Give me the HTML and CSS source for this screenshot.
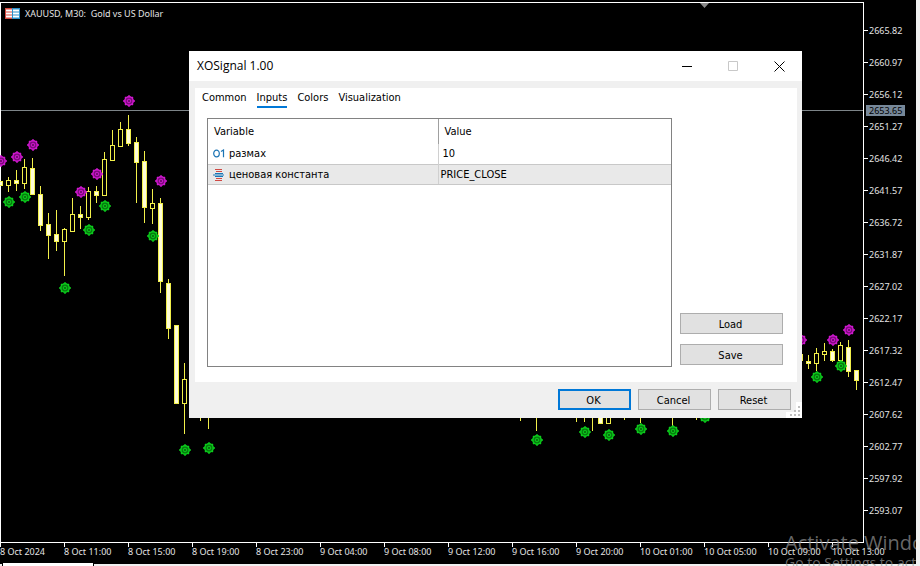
FILE: index.html
```html
<!DOCTYPE html>
<html lang="en">
<head>
<meta charset="UTF-8">
<title>XAUUSD, M30</title>
<link rel="stylesheet" href="styles.css">
</head>

<body>

<main class="terminal">

	<section class="chart">
		<svg class="plot" id="plot">
			<defs>
				<g id="gear">
					<path d="M0 -6V6M-6 0H6M-4 -4L4 4M-4 4L4 -4" stroke-width="1.3" />
					<circle r="4.2" stroke-width="1.5" />
					<circle r="1.8" stroke-width="1" />
				</g>
			</defs>
			<path class="shift-mark" d="M700 3H709L704.500 8Z" />
			<path class="wicks" id="wicks" />
			<path class="hollow" id="hollow" />
			<path class="filled" id="filled" />
			<g id="gears"></g>
		</svg>

		<div class="price-line"></div>

		<h1 class="symbol">
			<svg width="15" height="11" viewBox="0 0 15 11">
				<path fill="#d8493f" d="M0 0H7V11H0Z" />
				<path fill="#2a8fc9" d="M7 0H15V11H7Z" />
				<path stroke="#fff" stroke-width="2" d="M1 2.500H7M1 5.500H7M1 8.500H7M8 2.500H14M8 5.500H14M8 8.500H14" />
			</svg>
			<span>XAUUSD, M30:&nbsp; Gold vs US Dollar</span>
		</h1>
	</section>

	<aside class="prices">
		<span>2665.82</span>
		<span>2660.97</span>
		<span>2656.12</span>
		<span>2651.27</span>
		<span>2646.42</span>
		<span>2641.57</span>
		<span>2636.72</span>
		<span>2631.87</span>
		<span>2627.02</span>
		<span>2622.17</span>
		<span>2617.32</span>
		<span>2612.47</span>
		<span>2607.62</span>
		<span>2602.77</span>
		<span>2597.92</span>
		<span>2593.07</span>
		<strong class="current">2653.65</strong>
	</aside>

	<div class="times">
		<span>8 Oct 2024</span>
		<span>8 Oct 11:00</span>
		<span>8 Oct 15:00</span>
		<span>8 Oct 19:00</span>
		<span>8 Oct 23:00</span>
		<span>9 Oct 04:00</span>
		<span>9 Oct 08:00</span>
		<span>9 Oct 12:00</span>
		<span>9 Oct 16:00</span>
		<span>9 Oct 20:00</span>
		<span>10 Oct 01:00</span>
		<span>10 Oct 05:00</span>
		<span>10 Oct 09:00</span>
		<span>10 Oct 13:00</span>
	</div>

	<div class="bottom-tabs"><div class="bottom-tab"></div></div>

	<div class="watermark">
		<p class="watermark-title">Activate Windows</p>
		<p>Go to Settings to activate Windows.</p>
	</div>

</main>

<form class="dialog" role="dialog" aria-labelledby="dialog-title">

	<header class="titlebar">
		<h2 id="dialog-title">XOSignal 1.00</h2>
		<button type="button" aria-label="Minimize">
			<svg width="11" height="11"><path d="M0 5.500H10" /></svg>
		</button>
		<button type="button" aria-label="Maximize" disabled>
			<svg width="11" height="11"><path d="M.5 .5H9.500V9.500H.5Z" /></svg>
		</button>
		<button type="button" aria-label="Close">
			<svg width="11" height="11"><path d="M.5 .5L10.500 10.500M10.500 .5L.5 10.500" /></svg>
		</button>
	</header>

	<div class="panel">
		<nav class="tabs">
			<a href="#common">Common</a>
			<a href="#inputs" class="active">Inputs</a>
			<a href="#colors">Colors</a>
			<a href="#visualization">Visualization</a>
		</nav>

		<div class="inputs">
			<div class="table-box">
				<table>
					<thead>
						<tr><th>Variable</th><th>Value</th></tr>
					</thead>
					<tbody>
						<tr>
							<td>
								<svg width="12" height="10" viewBox="0 0 12 10">
									<ellipse cx="3.500" cy="4.500" rx="2.800" ry="3.300" fill="none" stroke="#1c74b4" stroke-width="1.200" />
									<path d="M8 2.500L10.500 1V8.300" fill="none" stroke="#1c74b4" stroke-width="1.200" />
								</svg>размах
							</td>
							<td class="number">10</td>
						</tr>
						<tr class="selected">
							<td>
								<svg width="12" height="12" viewBox="0 0 12 12">
									<path d="M2 .5H9M3 2.500H9M3 9.500H9M2 11.500H9" stroke="#cf4a45" />
									<path d="M2 4.500H10M2 7.500H10M0 6H11" stroke="#1878b8" />
								</svg>ценовая константа
							</td>
							<td>PRICE_CLOSE</td>
						</tr>
					</tbody>
				</table>
			</div>

			<div class="side">
				<button type="button">Load</button>
				<button type="button">Save</button>
			</div>
		</div>
	</div>

	<footer class="actions">
		<button type="submit" class="default">OK</button>
		<button type="button">Cancel</button>
		<button type="reset">Reset</button>
	</footer>

	<svg class="grip" width="16" height="16">
		<path class="grip-corner" d="M10 0H16V16H0V10H10Z" />
		<path d="M12 4h2v2h-2zM8 8h2v2h-2zM12 8h2v2h-2zM4 12h2v2h-2zM8 12h2v2h-2zM12 12h2v2h-2z" />
	</svg>
</form>

<script src="chart.js"></script>

</body>
</html>
```
FILE: styles.css
```css
* {
	box-sizing: border-box;
}

body {
	margin: 0;
	position: relative;
	background-color: #000;
	font-family: "DejaVu Sans Condensed", "Noto Sans", sans-serif;
	font-size: 11px;
	color: #000;
}

h1, h2, p {
	margin: 0;
	font-weight: normal;
}

button {
	font: inherit;
	color: inherit;
}

/* chart window */

.terminal {
	position: relative;
	display: grid;
	grid-template-columns: 1fr 53px;
	grid-template-rows: 1fr 20px 3px;
	min-height: 100vh;
	padding-top: 2px;
	border-right: 4px solid #f0f0f0;
	overflow: hidden;
	color: #e4e4e4;
	font-family: "Noto Sans", sans-serif;
	font-size: 9px;
}

.chart {
	position: relative;
	border: 1px solid #fff;
	margin-right: -1px;
}

.plot {
	position: absolute;
	top: -3px;
	left: -1px;
	width: 100%;
	height: 100%;
}

.shift-mark {
	fill: #8a8a8a;
}

.wicks, .hollow, .filled {
	stroke: #f2f04a;
	stroke-width: 1;
	fill: none;
	shape-rendering: crispEdges;
}

.hollow {
	fill: #000;
}

.filled {
	fill: #fffdd8;
}

.sell {
	stroke: #d018d0;
	fill: #780a78;
}

.buy {
	stroke: #0ccc1c;
	fill: #06780e;
}

.price-line {
	position: absolute;
	top: 107px;
	left: 0;
	right: 0;
	height: 1px;
	background-color: #7d8488;
}

.symbol {
	position: relative;
	display: flex;
	align-items: center;
	gap: 5px;
	padding: 4px;
	font-size: 9px;
	line-height: 13px;
}

.prices {
	position: relative;
	display: flex;
	flex-direction: column;
	padding-top: 12px;
}

.prices span {
	display: flex;
	align-items: center;
	gap: 1px;
	height: 32px;
}

.prices span::before {
	content: "";
	width: 5px;
	height: 1px;
	background-color: #fff;
}

.current {
	position: absolute;
	top: 103px;
	left: 3px;
	width: 39px;
	padding-left: 3px;
	background-color: #778899;
	color: #000;
	font-weight: normal;
	line-height: 11px;
}

.times {
	grid-column: 1 / -1;
	display: flex;
	overflow: hidden;
}

.times span {
	flex: none;
	width: 64px;
	line-height: 18px;
	white-space: nowrap;
}

.times span::before {
	content: "";
	display: block;
	width: 1px;
	height: 4px;
	margin-bottom: -4px;
	background-color: #fff;
}

.bottom-tabs {
	grid-column: 1 / -1;
	display: flex;
	align-items: flex-end;
	padding-left: 2px;
	border-top: 1px solid #000;
	background-color: #f0f0f0;
}

.bottom-tab {
	flex: none;
	width: 92px;
	height: 3px;
	border: 1px solid #000;
	border-width: 0 1px;
	background-color: #fff;
}

.watermark {
	position: absolute;
	top: 530px;
	left: 785px;
	color: rgba(150, 150, 150, .7);
	font-family: "Open Sans", sans-serif;
	font-size: 14px;
	line-height: 14px;
	white-space: nowrap;
}

.watermark-title {
	font-size: 20px;
	line-height: 26px;
}

/* indicator properties */

.dialog {
	position: absolute;
	top: 51px;
	left: 189px;
	width: 613px;
	background-color: #f0f0f0;
}

.titlebar {
	display: flex;
	align-items: center;
	height: 30px;
	padding-left: 8px;
	background-color: #fff;
}

.titlebar h2 {
	flex: 1;
	font-family: "Open Sans", sans-serif;
	font-size: 12px;
	line-height: 16px;
}

.titlebar button {
	display: flex;
	align-items: center;
	justify-content: center;
	width: 46px;
	height: 28px;
	padding: 0;
	border: 0;
	background: none;
}

.titlebar path {
	fill: none;
	stroke: #000;
}

.titlebar button:disabled path {
	stroke: #c8c8c8;
}

.panel {
	margin: 7px 5px 0 6px;
	padding: 0 14px 15px 12px;
	background-color: #fff;
}

.tabs {
	display: flex;
	gap: 10px;
	margin-left: -5px;
	padding-bottom: 10px;
}

.tabs a {
	height: 20px;
	border-bottom: 2px solid transparent;
	color: #000;
	line-height: 20px;
	text-decoration: none;
}

.tabs .active {
	border-color: #0078d7;
}

.inputs {
	display: flex;
	gap: 8px;
}

.table-box {
	flex: 1;
	height: 249px;
	border: 1px solid #828282;
}

table {
	width: 100%;
	border-collapse: collapse;
	table-layout: fixed;
}

th, td {
	height: 20px;
	padding: 1px 2px 0 5px;
	font-weight: normal;
	line-height: 18px;
	text-align: left;
}

th {
	height: 25px;
	padding-left: 6px;
}

th:first-child {
	width: 230px;
	border-right: 1px solid #a0a0a0;
}

td:first-child {
	border-right: 1px solid #d0d0d0;
}

td:last-child {
	padding-left: 2px;
}

td.number {
	padding-left: 4px;
}

td svg {
	margin-right: 4px;
	vertical-align: middle;
}

.selected td {
	border-top: 1px solid #c8c8c8;
	border-bottom: 1px solid #c8c8c8;
	background-color: #e9e9e9;
}

.side {
	display: flex;
	flex-direction: column;
	justify-content: flex-end;
	gap: 10px;
	width: 103px;
	padding-bottom: 2px;
}

.side button, .actions button {
	height: 21px;
	padding: 1px 2px 0 0;
	border: 1px solid #adadad;
	background-color: #e1e1e1;
}

.actions {
	display: flex;
	justify-content: flex-end;
	gap: 7px;
	padding: 7px 11px 8px;
}

.actions button {
	width: 73px;
}

.actions .default {
	border: 2px solid #0078d7;
}

.grip {
	position: absolute;
	right: 0;
	bottom: 0;
	fill: #bfbfbf;
}

.grip-corner {
	fill: #fff;
}
```
FILE: chart.js
```javascript
// x, high, body top, body bottom, low, filled
const candles = [
	[0, 181, 181, 185, 185, 1],
	[8, 177, 180, 185, 191, 0],
	[16, 170, 180, 183, 190, 1],
	[24, 159, 167, 183, 188, 0],
	[32, 158, 168, 194, 194, 1],
	[40, 186, 194, 225, 230, 1],
	[48, 213, 224, 235, 258, 1],
	[56, 210, 234, 241, 250, 1],
	[64, 228, 229, 241, 275, 0],
	[72, 198, 214, 231, 231, 0],
	[80, 206, 214, 217, 228, 1],
	[88, 187, 191, 217, 219, 0],
	[96, 186, 191, 195, 202, 1],
	[104, 152, 159, 195, 195, 0],
	[112, 130, 145, 160, 160, 0],
	[120, 122, 129, 146, 146, 0],
	[128, 115, 129, 143, 145, 1],
	[136, 137, 142, 162, 202, 1],
	[144, 151, 161, 207, 222, 1],
	[152, 189, 203, 208, 223, 0],
	[160, 198, 203, 281, 292, 1],
	[168, 279, 283, 328, 338, 1],
	[176, 325, 325, 403, 403, 1],
	[184, 363, 379, 403, 433, 0],
	[200, 400, 400, 410, 420, 0],
	[208, 400, 400, 410, 428, 0],
	[520, 400, 400, 410, 420, 0],
	[536, 400, 400, 410, 430, 0],
	[576, 400, 400, 410, 421, 0],
	[584, 400, 400, 410, 421, 0],
	[592, 400, 400, 410, 430, 0],
	[600, 400, 400, 423, 423, 1],
	[608, 400, 400, 423, 423, 0],
	[624, 400, 400, 410, 419, 0],
	[640, 400, 400, 410, 422, 0],
	[672, 400, 400, 410, 425, 0],
	[696, 400, 400, 410, 419, 0],
	[800, 350, 354, 360, 364, 1],
	[808, 355, 361, 363, 368, 1],
	[816, 348, 353, 363, 370, 0],
	[824, 343, 351, 354, 360, 0],
	[832, 349, 351, 360, 361, 1],
	[840, 342, 345, 360, 361, 0],
	[848, 340, 347, 371, 376, 1],
	[856, 370, 370, 380, 389, 1]
];

const sells = [[1, 161], [17, 157], [33, 145], [81, 192], [97, 174], [129, 101],
	[161, 181], [801, 340], [833, 340], [849, 330]];

const buys = [[9, 202], [25, 197], [65, 288], [89, 230], [105, 206], [153, 236],
	[185, 450], [209, 448], [417, 412], [537, 440], [585, 432], [609, 435],
	[641, 429], [673, 431], [705, 417], [817, 377], [841, 366]];

let wicks = "", hollow = "", filled = "", gears = "";

for (const [x, high, top, bottom, low, full] of candles) {
	const body = `M${x - 1.5} ${top + 0.5}h4V${bottom + 0.5}h-4Z`;
	wicks += `M${x + 0.5} ${high}V${low + 1}`;
	if (full) {
		filled += body;
	} else {
		hollow += body;
	}
}

for (const [x, y] of sells) {
	gears += `<use href="#gear" class="sell" x="${x}" y="${y}" />`;
}
for (const [x, y] of buys) {
	gears += `<use href="#gear" class="buy" x="${x}" y="${y}" />`;
}

document.getElementById("wicks").setAttribute("d", wicks);
document.getElementById("hollow").setAttribute("d", hollow);
document.getElementById("filled").setAttribute("d", filled);
document.getElementById("gears").innerHTML = gears;
```
